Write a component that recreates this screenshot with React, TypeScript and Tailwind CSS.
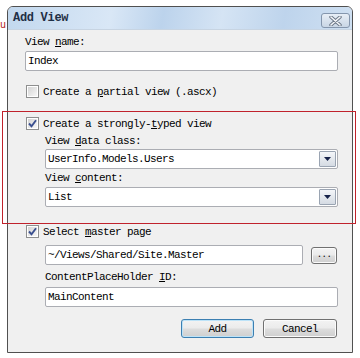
import type { ReactNode } from "react";

const mono = "font-['Liberation_Mono',monospace] text-[11px] tracking-[-0.6px] leading-[12px] text-black";

function Check({ checked }: { checked?: boolean }) {
  return (
    <span className="flex h-[13px] w-[13px] shrink-0 items-center justify-center border border-[#8e8f8f] bg-white p-[1px]">
      <span className="flex h-full w-full items-center justify-center bg-[linear-gradient(135deg,#d4d4d4,#f7f7f7)]">
        {checked && (
          <svg width="9" height="9" viewBox="0 0 9 9">
            <path d="M1 4.5 L3.5 7.2 L8 1.2" fill="none" stroke="#3a4f8f" strokeWidth="1.9" />
          </svg>
        )}
      </span>
    </span>
  );
}

function CheckRow({ checked, children }: { checked?: boolean; children: ReactNode }) {
  return (
    <div className="flex items-center gap-[4px] pl-[1px]">
      <Check checked={checked} />
      <span className={mono}>{children}</span>
    </div>
  );
}

function TextBox({ value }: { value: string }) {
  return (
    <div className={`flex h-[20px] items-center rounded-[2px] border border-[#abadb3] bg-white pl-[2px] ${mono}`}>
      {value}
    </div>
  );
}

function Select({ value }: { value: string }) {
  return (
    <div className={`flex h-[20px] items-center rounded-[2px] border border-[#abadb3] bg-white pl-[2px] pr-[1px] ${mono}`}>
      <span className="flex-1">{value}</span>
      <span className="flex h-[16px] w-[17px] items-center justify-center rounded-[1px] border border-[#9aa4b2] bg-[linear-gradient(to_bottom,#f4f6f9,#d5dbe3)]">
        <svg width="7" height="4" viewBox="0 0 7 4">
          <path d="M0 0 H7 L3.5 4 Z" fill="#16224a" />
        </svg>
      </span>
    </div>
  );
}

function Button({ children, primary, className }: { children: ReactNode; primary?: boolean; className?: string }) {
  return (
    <div
      className={`flex items-center justify-center rounded-[3px] border ${
        primary ? "border-[#3c7fb1] shadow-[inset_0_0_0_1px_#bde3f8]" : "border-[#707070] shadow-[inset_0_0_0_1px_#fbfbfb]"
      } bg-[linear-gradient(to_bottom,#f3f3f3_0%,#ebebeb_48%,#dddddd_52%,#cfcfcf_100%)] ${mono} ${className ?? ""}`}
    >
      {children}
    </div>
  );
}

export default function App() {
  return (
    <div className="relative h-[358px] w-[360px] overflow-hidden bg-white">
      <span className="absolute left-0 top-[21px] font-['Liberation_Mono',monospace] text-[10px] leading-[10px] text-[#b01c1c]">
        u
      </span>

      <div className="relative ml-[7px] mt-[6px] flex h-[347px] w-[346px] flex-col rounded-t-[6px] border border-[#505050] bg-[#f0f0f0]">
        <div className="flex h-[22px] items-start justify-between rounded-t-[5px] bg-[linear-gradient(100deg,#c2d8ee_0%,#d9e7f6_30%,#bcd3ec_45%,#d5e4f4_62%,#bed4ec_80%,#cfe0f2_100%)]">
          <span className="pl-[5px] pt-[5px] font-['Liberation_Mono',monospace] text-[12px] font-bold leading-[12px] tracking-[-0.3px] text-[#1f2f45]">
            Add View
          </span>
          <span className="mr-[2px] mt-[6px] flex h-[15px] w-[29px] items-center justify-center rounded-[3px] border border-[#8496ad] bg-[linear-gradient(to_bottom,#e7eef6,#c9d6e5)]">
            <svg width="13" height="10" viewBox="0 0 13 10">
              <path d="M2 1 L11 9 M11 1 L2 9" stroke="#6b7787" strokeWidth="3.4" strokeLinecap="round" />
              <path d="M2 1 L11 9 M11 1 L2 9" stroke="#f4f6f9" strokeWidth="1.6" strokeLinecap="round" />
            </svg>
          </span>
        </div>

        <div className="flex flex-1 flex-col border-t border-[#c7d4e2] pl-[17px] pr-[14px]">
          <div className={`mt-[6px] ${mono}`}>
            View <u className="underline-offset-[1px]">n</u>ame:
          </div>
          <div className="mt-[3px]">
            <TextBox value="Index" />
          </div>

          <div className="mt-[14px]">
            <CheckRow>
              Create a <u>p</u>artial view (.ascx)
            </CheckRow>
          </div>

          <div className="mt-[19px]">
            <CheckRow checked>
              Create a strongly-<u>t</u>yped view
            </CheckRow>
          </div>
          <div className="ml-[20px] flex flex-col">
            <div className={`mt-[5px] ${mono}`}>
              View <u>d</u>ata class:
            </div>
            <div className="mt-[2px]">
              <Select value="UserInfo.Models.Users" />
            </div>
            <div className={`mt-[3px] ${mono}`}>
              View <u>c</u>ontent:
            </div>
            <div className="mt-[3px]">
              <Select value="List" />
            </div>
          </div>

          <div className="mt-[18px]">
            <CheckRow checked>
              Select <u>m</u>aster page
            </CheckRow>
          </div>
          <div className="ml-[20px] flex flex-col">
            <div className="mt-[7px] flex items-center">
              <div className="flex-1">
                <TextBox value="~/Views/Shared/Site.Master" />
              </div>
              <Button className="ml-[8px] mr-[1px] h-[17px] w-[26px] !text-[9px] !leading-[9px] text-[#555]">...</Button>
            </div>
            <div className={`mt-[6px] ${mono}`}>
              ContentPlaceHolder <u>I</u>D:
            </div>
            <div className="mt-[4px]">
              <TextBox value="MainContent" />
            </div>
          </div>

          <div className="mr-[1px] mt-[12px] flex justify-end gap-[9px]">
            <Button primary className="h-[19px] w-[73px]">
              Add
            </Button>
            <Button className="h-[19px] w-[74px]">Cancel</Button>
          </div>
        </div>
      </div>

      <div className="pointer-events-none absolute left-[2px] top-[111px] h-[113px] w-[354px] border border-[#c0222c]" />
    </div>
  );
}
